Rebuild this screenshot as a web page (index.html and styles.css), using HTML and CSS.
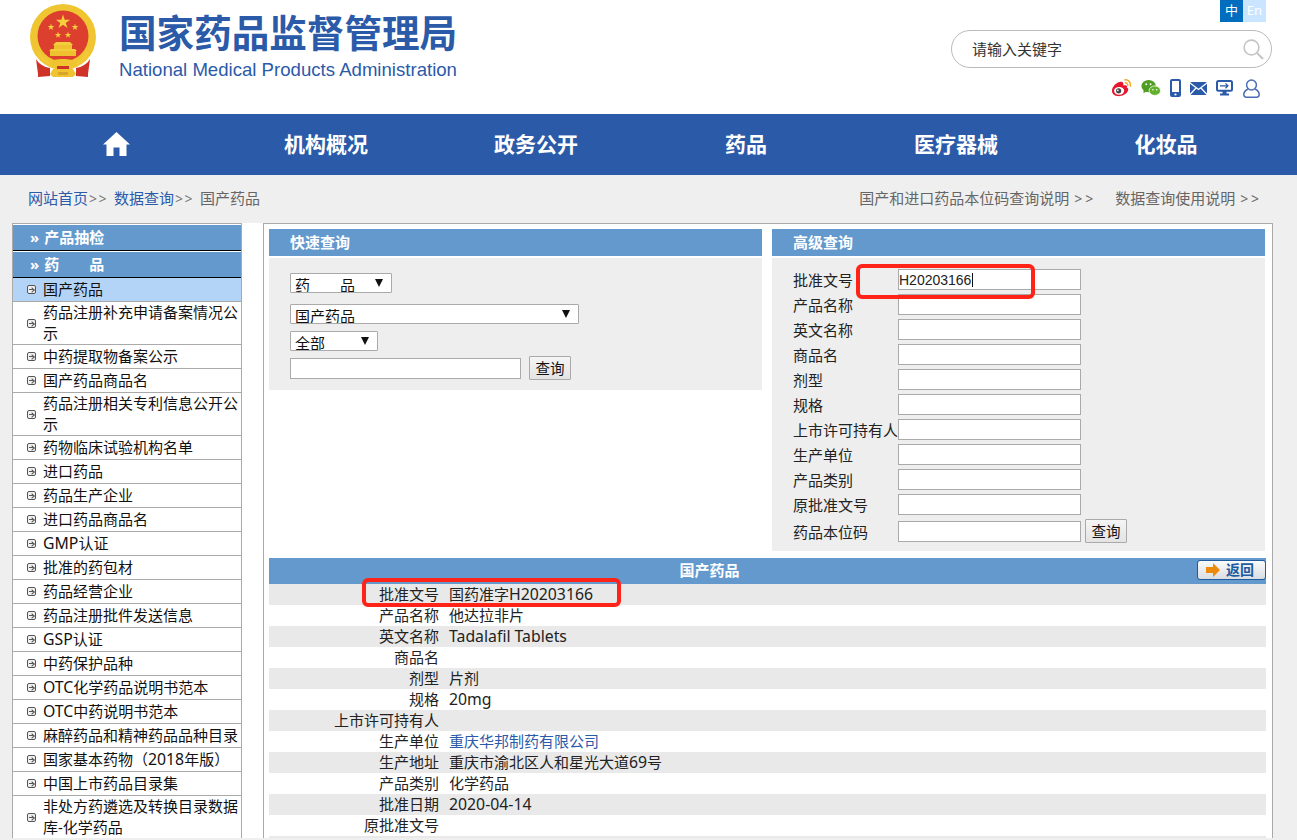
FILE: index.html
```html
<!DOCTYPE html>
<html lang="zh-CN">
<head>
<meta charset="utf-8">
<title>国家药品监督管理局</title>
<link rel="stylesheet" href="styles.css">
</head>
<body>
<header class="top">
  <div class="brand">
    <svg class="emblem" width="68" height="74" viewBox="0 0 68 74">
      <defs><path id="star" d="M0 -1 L.225 -.309 L.951 -.309 L.363 .118 L.588 .809 L0 .382 L-.588 .809 L-.363 .118 L-.951 -.309 L-.225 -.309Z" fill="#f6d03c"/></defs>
      <circle cx="34" cy="33" r="33" fill="#efc531"/>
      <circle cx="34" cy="32" r="25.500" fill="#dc3f2e"/>
      <use href="#star" transform="translate(34 18) scale(7.500)"/>
      <use href="#star" transform="translate(22 23) scale(3.600)"/>
      <use href="#star" transform="translate(46 23) scale(3.600)"/>
      <use href="#star" transform="translate(29 31) scale(3.400)"/>
      <use href="#star" transform="translate(39 31) scale(3.400)"/>
      <path d="M27 38 H41 L44 41 H24Z" fill="#f4cd3a"/>
      <rect x="25" y="41" width="18" height="4" fill="#efc02f"/>
      <path d="M22 45 H46 L48 47 H20Z" fill="#f4cd3a"/>
      <rect x="21" y="47" width="26" height="5" fill="#efc02f"/>
      <path d="M10 48 C14 66 54 66 58 48" fill="none" stroke="#f2ca38" stroke-width="3"/>
      <path d="M7 55 C10 60 15 63 21 64 L21 72 L9 73 L9 70 Z" fill="#cf3328"/>
      <path d="M61 55 C58 60 53 63 47 64 L47 72 L59 73 L59 70 Z" fill="#cf3328"/>
      <path d="M20 58 C24 54 44 54 48 58 L46 62 H22Z" fill="#f0c431"/>
      <path d="M24 65 H44 L47 70 L44 73 H24 L21 70Z" fill="#f0c431"/>
      <rect x="28" y="62" width="12" height="3" fill="#cf3328"/>
      <rect x="29" y="68" width="10" height="3" fill="#d8a52a"/>
    </svg>
    <div class="brand-text">
      <div class="brand-cn">国家药品监督管理局</div>
      <div class="brand-en">National Medical Products Administration</div>
    </div>
  </div>
  <div class="tools">
    <div class="lang"><a class="lang-zh">中</a><a class="lang-en">En</a></div>
    <div class="search">
      <span class="search-text">请输入关键字</span>
      <svg class="search-icon" width="21" height="21" viewBox="0 0 21 21" fill="none" stroke="#c4c4c4" stroke-width="1.6"><circle cx="8.500" cy="8.500" r="7.400"/><path d="M14 14 L20 20" stroke-width="2"/></svg>
    </div>
    <div class="social">
      <svg width="21" height="20" viewBox="0 0 22 20"><path d="M1 13 C1 8 7 3 11 3.500 C13.500 4 13 6.500 13 7.500 C16 6.300 17.500 7.500 16.500 9.500 C18 10 18.500 11.500 17.800 13 C16 17.500 10 19 6.500 18.500 C3 18 1 16 1 13Z" fill="#e6162d"/><ellipse cx="8.500" cy="13" rx="5.300" ry="4.100" fill="#fff"/><circle cx="8" cy="13" r="2.700" fill="#444"/><circle cx="7.200" cy="12.400" r=".9" fill="#fff"/><path d="M14 1.500 C18 .8 21.300 4 20.300 8.500" fill="none" stroke="#f5a623" stroke-width="1.600"/><path d="M14.500 4.500 C16.500 4.200 18 5.800 17.500 7.800" fill="none" stroke="#f5a623" stroke-width="1.400"/></svg>
      <svg width="20" height="18" viewBox="0 0 21 18"><ellipse cx="8" cy="7" rx="7.600" ry="6.400" fill="#4f9e23"/><path d="M3 11 L2.500 14.500 L7 12Z" fill="#4f9e23"/><ellipse cx="14.500" cy="11.800" rx="6" ry="5" fill="#62b12d" stroke="#fff" stroke-width=".8"/><circle cx="5.500" cy="5" r="1" fill="#fff"/><circle cx="10" cy="5" r="1" fill="#fff"/><circle cx="12.500" cy="10.800" r=".8" fill="#fff"/><circle cx="16.500" cy="10.800" r=".8" fill="#fff"/></svg>
      <svg width="11" height="18" viewBox="0 0 11 18"><rect width="11" height="18" rx="2" fill="#2b5aa9"/><rect x="2" y="2" width="7" height="11" fill="#fff"/><circle cx="5.500" cy="15.500" r="1.100" fill="#fff"/></svg>
      <svg width="17" height="13" viewBox="0 0 17 13"><rect width="17" height="13" rx="1.500" fill="#2b5aa9"/><path d="M0 1 L8.500 7.500 L17 1 M0 12.500 L6 6 M17 12.500 L11 6" fill="none" stroke="#fff" stroke-width="1.300"/></svg>
      <svg width="17" height="16" viewBox="0 0 17 16"><rect x="1" y="1" width="15" height="9.800" rx="1.500" fill="#fff" stroke="#2b5aa9" stroke-width="2"/><rect x="6.500" y="11" width="4" height="3" fill="#2b5aa9"/><rect x="4" y="13.500" width="9" height="2" fill="#2b5aa9"/><path d="M4 5.800 H12 M9.500 3.400 L12 5.800 L9.500 8.200" fill="none" stroke="#2b5aa9" stroke-width="1.200"/></svg>
      <svg class="user" width="17" height="19" viewBox="0 0 17 19" fill="none" stroke="#4b6db5" stroke-width="1.500"><circle cx="8.500" cy="6" r="4.900"/><path d="M5 10 C2 11.500 .8 13.500 .8 15.500 C.8 17.300 2 18.200 3.500 18.200 H13.500 C15 18.200 16.200 17.300 16.200 15.500 C16.200 13.500 15 11.500 12 10"/></svg>
    </div>
  </div>
</header>

<nav class="nav">
  <a class="nav-item"><svg width="27" height="24" viewBox="0 0 27 24"><path d="M13.500 0 L27 12.500 L23.500 12.500 L23.500 24 L16.500 24 L16.500 15.500 L10.500 15.500 L10.500 24 L3.500 24 L3.500 12.500 L0 12.500Z" fill="#fff"/></svg></a>
  <a class="nav-item">机构概况</a>
  <a class="nav-item">政务公开</a>
  <a class="nav-item">药品</a>
  <a class="nav-item">医疗器械</a>
  <a class="nav-item">化妆品</a>
</nav>

<div class="crumbs">
  <div><a class="link">网站首页</a><span class="sep">&gt;&gt;</span><a class="link">数据查询</a><span class="sep">&gt;&gt;</span><span>国产药品</span></div>
  <div class="crumbs-right"><span>国产和进口药品本位码查询说明<span class="gt">&gt;&gt;</span></span><span>数据查询使用说明<span class="gt">&gt;&gt;</span></span></div>
</div>

<main class="main">
  <aside class="side">
    <div class="side-head">»<span>产品抽检</span></div>
    <div class="side-head">»<span>药　　品</span></div>
    <ul class="side-list">
      <li class="active"><i class="bullet"></i><span>国产药品</span></li>
      <li class="two"><i class="bullet"></i><span>药品注册补充申请备案情况公示</span></li>
      <li><i class="bullet"></i><span>中药提取物备案公示</span></li>
      <li><i class="bullet"></i><span>国产药品商品名</span></li>
      <li class="two"><i class="bullet"></i><span>药品注册相关专利信息公开公示</span></li>
      <li><i class="bullet"></i><span>药物临床试验机构名单</span></li>
      <li><i class="bullet"></i><span>进口药品</span></li>
      <li><i class="bullet"></i><span>药品生产企业</span></li>
      <li><i class="bullet"></i><span>进口药品商品名</span></li>
      <li><i class="bullet"></i><span><b class="lat">GMP</b>认证</span></li>
      <li><i class="bullet"></i><span>批准的药包材</span></li>
      <li><i class="bullet"></i><span>药品经营企业</span></li>
      <li><i class="bullet"></i><span>药品注册批件发送信息</span></li>
      <li><i class="bullet"></i><span><b class="lat">GSP</b>认证</span></li>
      <li><i class="bullet"></i><span>中药保护品种</span></li>
      <li><i class="bullet"></i><span><b class="lat">OTC</b>化学药品说明书范本</span></li>
      <li><i class="bullet"></i><span><b class="lat">OTC</b>中药说明书范本</span></li>
      <li><i class="bullet"></i><span>麻醉药品和精神药品品种目录</span></li>
      <li><i class="bullet"></i><span>国家基本药物（<b class="lat">2018</b>年版）</span></li>
      <li><i class="bullet"></i><span>中国上市药品目录集</span></li>
      <li class="two"><i class="bullet"></i><span>非处方药遴选及转换目录数据库-化学药品</span></li>
    </ul>
  </aside>

  <section class="frame">
    <div class="panels">
      <div class="panel">
        <h2 class="panel-title">快速查询</h2>
        <div class="panel-body quick">
          <div class="pick pick-a"><span>药　　品</span><i class="tri"></i></div>
          <div class="pick pick-b"><span>国产药品</span><i class="tri"></i></div>
          <div class="pick pick-c"><span>全部</span><i class="tri"></i></div>
          <div class="quick-row"><input class="field field-q" type="text"><button class="btn">查询</button></div>
        </div>
      </div>
      <div class="panel">
        <h2 class="panel-title">高级查询</h2>
        <div class="panel-body adv">
          <label class="adv-row"><span>批准文号</span><input class="field" type="text" value="H20203166"></label>
          <label class="adv-row"><span>产品名称</span><input class="field" type="text"></label>
          <label class="adv-row"><span>英文名称</span><input class="field" type="text"></label>
          <label class="adv-row"><span>商品名</span><input class="field" type="text"></label>
          <label class="adv-row"><span>剂型</span><input class="field" type="text"></label>
          <label class="adv-row"><span>规格</span><input class="field" type="text"></label>
          <label class="adv-row"><span>上市许可持有人</span><input class="field" type="text"></label>
          <label class="adv-row"><span>生产单位</span><input class="field" type="text"></label>
          <label class="adv-row"><span>产品类别</span><input class="field" type="text"></label>
          <label class="adv-row"><span>原批准文号</span><input class="field" type="text"></label>
          <label class="adv-row adv-last"><span>药品本位码</span><input class="field" type="text"><button class="btn" type="button">查询</button></label>
          <div class="caret"></div>
          <div class="mark mark-adv"></div>
        </div>
      </div>
    </div>

    <div class="result">
      <div class="result-title">国产药品<a class="back"><svg width="14" height="14" viewBox="0 0 14 14"><path d="M0 4 H7 V0 L14 7 L7 14 V10 H0Z" fill="#ec8a0c"/></svg><span>返回</span></a></div>
      <table class="info">
        <tr><th>批准文号</th><td>国药准字<b class="lat">H20203166</b></td></tr>
        <tr><th>产品名称</th><td>他达拉非片</td></tr>
        <tr><th>英文名称</th><td><b class="lat">Tadalafil Tablets</b></td></tr>
        <tr><th>商品名</th><td></td></tr>
        <tr><th>剂型</th><td>片剂</td></tr>
        <tr><th>规格</th><td><b class="lat">20mg</b></td></tr>
        <tr><th>上市许可持有人</th><td></td></tr>
        <tr><th>生产单位</th><td><a class="link">重庆华邦制药有限公司</a></td></tr>
        <tr><th>生产地址</th><td>重庆市渝北区人和星光大道<b class="lat">69</b>号</td></tr>
        <tr><th>产品类别</th><td>化学药品</td></tr>
        <tr><th>批准日期</th><td><b class="lat">2020-04-14</b></td></tr>
        <tr><th>原批准文号</th><td></td></tr>
        <tr><th>&nbsp;</th><td></td></tr>
      </table>
      <div class="mark mark-res"></div>
    </div>
  </section>
</main>
</body>
</html>
```

FILE: styles.css
```css
* { box-sizing: border-box; }
html, body { margin: 0; height: 840px; overflow: hidden; }
body {
  background: #efefef;
  color: #222;
  font: 15px/21px "Noto Sans", "Noto Sans CJK SC", sans-serif;
}
ul { list-style: none; margin: 0; padding: 0; }
h2 { margin: 0; }
.lat { font-weight: normal; font-size: 15.800px; }

/* header */
.top {
  height: 114px;
  background: #fff;
  display: flex;
  justify-content: space-between;
  padding-left: 29px;
}
.brand { display: flex; gap: 22px; padding-top: 4px; height: 80px; }
.brand-text { padding-top: 5px; }
.brand-cn {
  font: bold 37.600px/44px "Noto Sans CJK SC", sans-serif;
  color: #2b5aa9;
  white-space: nowrap;
}
.brand-en {
  font: 18.600px/24px "Liberation Sans", sans-serif;
  color: #2b5aa9;
  margin-top: 5px;
  white-space: nowrap;
}
.tools {
  width: 321px;
  margin-right: 25px;
  display: flex;
  flex-direction: column;
}
.lang { display: flex; align-self: flex-end; margin-right: 6px; }
.lang a {
  width: 23px;
  height: 22px;
  color: #fff;
  font-size: 13px;
  line-height: 21px;
  text-align: center;
}
.lang-zh { background: #006dbf; }
.lang-en { background: #c9e5ff; }
.search {
  height: 38px;
  margin-top: 8px;
  border: 1px solid #bbb;
  border-radius: 19px;
  background: #fff;
  display: flex;
  align-items: center;
  justify-content: space-between;
  padding: 0 7px 0 20px;
}
.search-text { font-size: 15px; color: #333; }
.social {
  display: flex;
  align-items: center;
  align-self: flex-end;
  gap: 9px;
  margin: 10px 12px 0 0;
}
.user { margin-left: 1px; }

/* nav */
.nav {
  height: 61px;
  background: #2b5aa9;
  display: grid;
  grid-template-columns: repeat(6, 210px);
  padding-left: 11px;
}
.nav-item {
  display: flex;
  align-items: center;
  justify-content: center;
  padding-bottom: 2px;
  color: #fff;
  font: bold 21px/1 "Noto Sans CJK SC", sans-serif;
}

/* breadcrumb */
.crumbs {
  height: 48px;
  display: flex;
  justify-content: space-between;
  align-items: center;
  padding: 0 35px 1px 28px;
  color: #666;
}
.link { color: #2b5aa9; }
.sep { display: inline-block; width: 26px; padding-left: 1px; letter-spacing: 1.500px; color: #777; font-size: 14px; }
.gt { margin-left: 5px; letter-spacing: 2.900px; font-size: 14px; }
.crumbs-right { display: flex; gap: 19px; }

/* layout */
.main {
  margin-left: 12px;
  width: 1261px;
  height: 615px;
  background: #fff;
  display: flex;
  gap: 21px;
  overflow: hidden;
}

/* sidebar */
.side {
  width: 230px;
  flex: none;
  height: 615px;
  border: 1px solid #aaa;
  border-bottom: 0;
  padding-top: 1px;
  background: #fff;
  color: #111;
}
.side-head {
  height: 26px;
  padding-left: 17px;
  border-bottom: 1px solid #000;
  background: #6499cd;
  color: #fff;
  font-weight: bold;
  line-height: 25px;
  display: flex;
  gap: 5px;
}
.side-head:first-child { margin-bottom: 1px; }
.side-list li {
  display: flex;
  align-items: center;
  gap: 7px;
  padding-left: 14px;
  line-height: 23px;
  border-bottom: 1px solid #aaa;
}
.side-list li.two { line-height: 21px; }
.side-list li.active { background: #b3d4f7; }
.bullet {
  width: 9px;
  height: 9px;
  flex: none;
  position: relative;
  border: 1px solid #555;
  border-radius: 2px;
  background: #f1f1f1;
}
.bullet::before {
  content: "";
  position: absolute;
  left: 1px;
  top: 3px;
  width: 4px;
  height: 1px;
  background: #555;
}
.bullet::after {
  content: "";
  position: absolute;
  left: 2px;
  top: 2px;
  width: 3px;
  height: 3px;
  border-top: 1px solid #555;
  border-right: 1px solid #555;
  transform: rotate(45deg);
}
.side-list span { width: 197px; }

/* frame */
.frame {
  flex: 1;
  border: 1px solid #aaa;
  border-bottom: 0;
  padding: 5px 0 0 5px;
}
.panels { display: flex; gap: 10px; }
.panel { width: 493px; }
.panel-title {
  height: 27px;
  padding-left: 21px;
  background: #6499cd;
  color: #fff;
  font-size: 15px;
  line-height: 27px;
}
.panel-body { margin-top: 2px; background: #eee; }
.quick { height: 132px; padding: 15px 0 0 21px; display: flex; flex-direction: column; align-items: flex-start; }
.pick {
  height: 20px;
  background: #fff;
  border: 1px solid #aaa;
  border-radius: 1px;
  padding-left: 4px;
  overflow: hidden;
  display: flex;
  justify-content: space-between;
  color: #111;
  line-height: 23px;
}
.pick-a { width: 102px; padding-right: 8px; margin-bottom: 11px; }
.pick-b { width: 289px; padding-right: 8px; margin-bottom: 7px; }
.pick-c { width: 88px; padding-right: 8px; margin-bottom: 7px; }
.tri {
  width: 0;
  height: 0;
  margin-top: 5px;
  border: 4.500px solid transparent;
  border-top: 8px solid #111;
  border-bottom: 0;
}
.quick-row { display: flex; align-items: center; gap: 8px; margin-top: -2px; }
.field {
  width: 183px;
  height: 21px;
  border: 1px solid #aaa;
  background: #fff;
  padding: 0;
  margin: 0;
  color: #222;
  font: 14px/19px "Liberation Sans", sans-serif;
  outline: none;
}
.field-q { width: 231px; }
.btn {
  width: 42px;
  height: 24px;
  padding: 0;
  border: 1px solid #aaa;
  border-radius: 1px;
  background: linear-gradient(#f5f5f5, #e3e3e3);
  color: #111;
  font: 14.500px/20px "Noto Sans CJK SC", sans-serif;
}

.adv { height: 293px; padding: 11px 0 0 21px; position: relative; }
.adv-row { display: flex; align-items: center; height: 21px; margin-bottom: 4px; }
.adv-row span { width: 105px; flex: none; white-space: nowrap; padding-top: 2px; }
.adv-last { height: 24px; margin-top: 2px; }
.adv-last .btn { margin-left: 4px; }
.caret {
  position: absolute;
  left: 200px;
  top: 15px;
  width: 1px;
  height: 14px;
  background: #111;
}

.mark {
  position: absolute;
  border: 4px solid #ff2318;
  border-radius: 6px;
  pointer-events: none;
}
.mark-adv { left: 84px; top: 6px; width: 179px; height: 35px; }

/* result */
.result { width: 997px; margin-top: 7px; position: relative; }
.result-title {
  height: 26px;
  background: #6499cd;
  color: #fff;
  font-weight: bold;
  line-height: 24px;
  text-align: center;
  position: relative;
  padding-right: 116px;
}
.back {
  position: absolute;
  right: 0;
  top: 2px;
  width: 69px;
  height: 20px;
  border: 1px solid #1d5c9f;
  border-radius: 3px;
  background: linear-gradient(#fafafa, #d9dde2);
  display: flex;
  align-items: center;
  gap: 6px;
  padding-left: 8px;
  color: #1d5c9f;
  font-size: 14px;
  line-height: 18px;
}
.info { width: 100%; border-collapse: collapse; }
.info tr { height: 21px; }
.info tr:nth-child(odd) { background: #e9e9e9; }
.info th, .info td { padding: 0; font-weight: normal; line-height: 21px; height: 21px; }
.info th { width: 170px; text-align: right; }
.info td { padding-left: 10px; }
.mark-res { left: 93px; top: 20px; width: 259px; height: 29px; }
```
